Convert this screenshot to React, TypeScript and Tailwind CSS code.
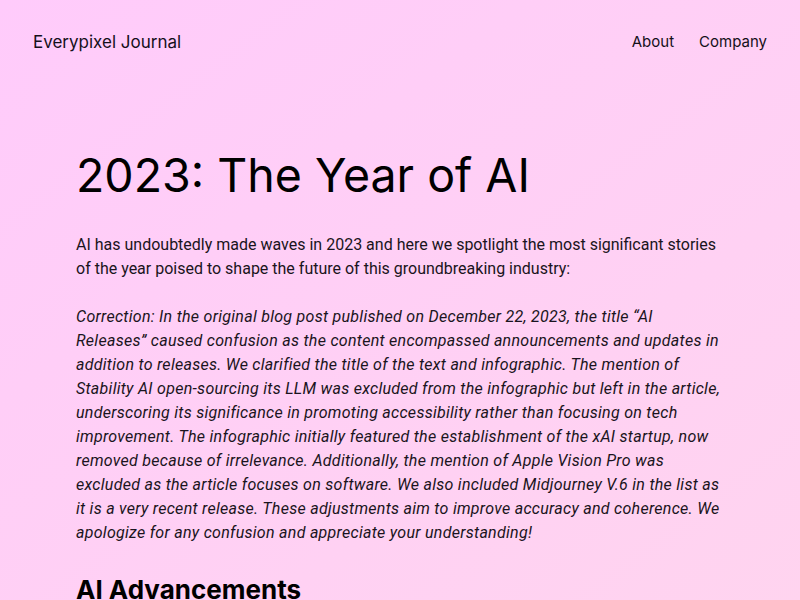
export default function App() {
  return (
    <div className="min-h-[600px] w-full bg-gradient-to-br from-[#ffcbfb] to-[#ffd4ef] text-[#111] overflow-hidden">
      <header className="flex justify-between items-start px-[33px] pt-[31px] h-[80px] font-['Inter',sans-serif] text-[#15101a]">
        <div className="leading-[22px] text-[17px]">Everypixel Journal</div>
        <nav className="flex gap-[25px] leading-[22px] text-[15px]">
          <span>About</span>
          <span>Company</span>
        </nav>
      </header>
      <main className="mx-auto w-[648px] pt-[67px]">
        <h1 className="font-['Inter',sans-serif] text-[46.5px] leading-[56px] font-normal text-black">2023: The Year of AI</h1>
        <div className="mt-[30px] font-['Roboto',sans-serif] text-[16px] leading-[24px] text-[#1a1420]">
          <p>AI has undoubtedly made waves in 2023 and here we spotlight the most significant stories of the year poised to shape the future of this groundbreaking industry:</p>
          <p className="mt-[24px] italic tracking-[0.28px]">Correction: In the original blog post published on December 22, 2023, the title “AI Releases” caused confusion as the content encompassed announcements and updates in addition to releases. We clarified the title of the text and infographic. The mention of Stability AI open-sourcing its LLM was excluded from the infographic but left in the article, underscoring its significance in promoting accessibility rather than focusing on tech improvement. The infographic initially featured the establishment of the xAI startup, now removed because of irrelevance. Additionally, the mention of Apple Vision Pro was excluded as the article focuses on software. We also included Midjourney V.6 in the list as it is a very recent release. These adjustments aim to improve accuracy and coherence. We apologize for any confusion and appreciate your understanding!</p>
          <h2 className="mt-[27px] font-['Inter',sans-serif] text-[26px] leading-[36px] font-bold text-black">AI Advancements</h2>
        </div>
      </main>
    </div>
  );
}
